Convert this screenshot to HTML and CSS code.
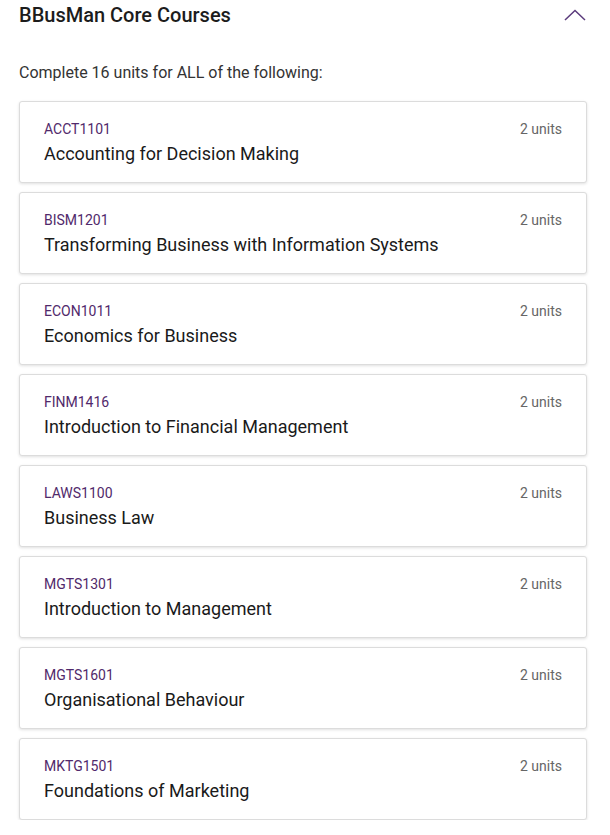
FILE: index.html
```html
<!DOCTYPE html>
<html lang="en">

<head>
    <meta charset="UTF-8">
    <meta name="viewport" content="width=device-width, initial-scale=1.0">
    <title>BBusMan Core Courses</title>
    <link rel="stylesheet" href="styles.css">
</head>

<body>

    <div class="section">
        <div class="section-header">
            <div class="section-title">BBusMan Core Courses</div>
            <svg class="chevron" width="22" height="12" viewBox="0 0 22 12">
                <path d="M1 11 L11 1.5 L21 11" fill="none" stroke="#5b3b7c" stroke-width="1.5" />
            </svg>
        </div>

        <p class="rule">Complete 16 units for ALL of the following:</p>

        <div class="course-list">
            <div class="course-card">
                <div class="course-info">
                    <div class="course-code">ACCT1101</div>
                    <div class="course-name">Accounting for Decision Making</div>
                </div>
                <div class="course-units">2 units</div>
            </div>
            <div class="course-card">
                <div class="course-info">
                    <div class="course-code">BISM1201</div>
                    <div class="course-name">Transforming Business with Information Systems</div>
                </div>
                <div class="course-units">2 units</div>
            </div>
            <div class="course-card">
                <div class="course-info">
                    <div class="course-code">ECON1011</div>
                    <div class="course-name">Economics for Business</div>
                </div>
                <div class="course-units">2 units</div>
            </div>
            <div class="course-card">
                <div class="course-info">
                    <div class="course-code">FINM1416</div>
                    <div class="course-name">Introduction to Financial Management</div>
                </div>
                <div class="course-units">2 units</div>
            </div>
            <div class="course-card">
                <div class="course-info">
                    <div class="course-code">LAWS1100</div>
                    <div class="course-name">Business Law</div>
                </div>
                <div class="course-units">2 units</div>
            </div>
            <div class="course-card">
                <div class="course-info">
                    <div class="course-code">MGTS1301</div>
                    <div class="course-name">Introduction to Management</div>
                </div>
                <div class="course-units">2 units</div>
            </div>
            <div class="course-card">
                <div class="course-info">
                    <div class="course-code">MGTS1601</div>
                    <div class="course-name">Organisational Behaviour</div>
                </div>
                <div class="course-units">2 units</div>
            </div>
            <div class="course-card">
                <div class="course-info">
                    <div class="course-code">MKTG1501</div>
                    <div class="course-name">Foundations of Marketing</div>
                </div>
                <div class="course-units">2 units</div>
            </div>
        </div>
    </div>

</body>

</html>
```

FILE: styles.css
```css
body {
    font-family: Roboto, "Liberation Sans", Arial, sans-serif;
    margin: 0;
    padding: 0;
    background-color: white;
    color: #1a1a1a;
}

.section {
    width: 568px;
    margin-left: 19px;
}

.section-header {
    display: flex;
    align-items: center;
    justify-content: space-between;
    height: 30px;
}

.section-title {
    font-size: 20px;
    font-weight: 500;
    color: #1c1c1c;
}

.section-header .chevron {
    margin-right: 1px;
    margin-bottom: 1px;
}

.rule {
    margin: 33px 0 18px 0;
    font-size: 16px;
    color: #333;
    line-height: 20px;
}

.course-list {
    display: flex;
    flex-direction: column;
    gap: 9px;
}

.course-card {
    display: flex;
    justify-content: space-between;
    align-items: flex-start;
    height: 82px;
    box-sizing: border-box;
    padding: 18px 24px 0 24px;
    border: 1px solid #dcdcdc;
    border-radius: 3px;
    box-shadow: 0 1px 3px rgba(0, 0, 0, 0.12);
    background-color: white;
}

.course-code {
    font-size: 14px;
    color: #51296b;
    line-height: 18px;
}

.course-name {
    font-size: 18px;
    color: #1a1a1a;
    line-height: 22px;
    margin-top: 5px;
}

.course-units {
    font-size: 14px;
    color: #666;
    line-height: 18px;
}
```
